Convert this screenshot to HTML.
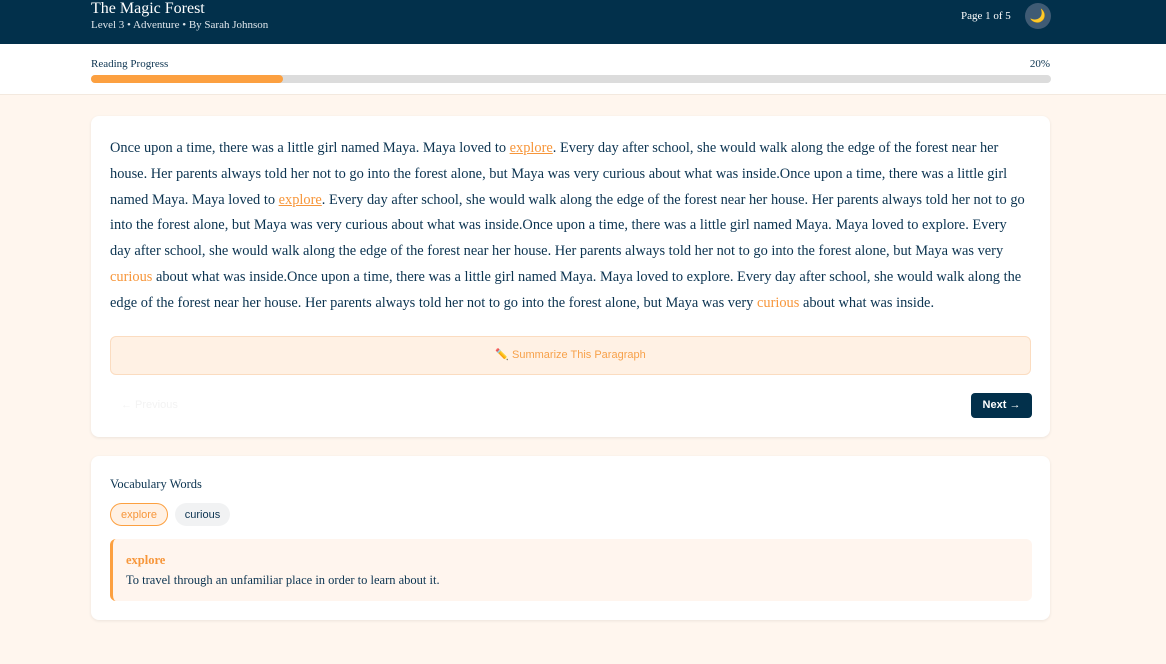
<!DOCTYPE html><html><head><style>
*{margin:0;padding:0;box-sizing:border-box}
body{width:1166px;height:664px;background:#fff6ee;font-family:"Liberation Serif",serif;color:#0b3350;overflow:hidden}
.hd{height:44px;background:#02304b;color:#fff;position:relative}
.t{position:absolute;left:91px;top:0px;font-size:16px}
.s{position:absolute;left:91px;top:19px;font-size:11px;color:#dfe6ec}
.pg{position:absolute;left:961px;top:10px;font-size:11px}
.moon{position:absolute;left:1025px;top:3px;width:26px;height:26px;border-radius:50%;background:#3f5b74;color:#f7c948;font-size:13px;text-align:center;line-height:26px}
.pr{height:51px;background:#fff;border-bottom:1px solid #f3e9df;position:relative;font-size:11px}
.pl{position:absolute;left:91px;top:14px}.pp{position:absolute;right:116px;top:14px}
.bar{position:absolute;left:91px;top:31px;width:960px;height:8px;background:#dcdcdc;border-radius:4px}
.bar div{width:192px;height:8px;background:#fca040;border-radius:4px}
.card{position:absolute;left:91px;width:959px;background:#fff;border-radius:8px;box-shadow:0 1px 3px rgba(0,0,0,.08)}
.txt{padding:0 19px;margin-top:20px;font-size:14.4px;line-height:25.8px}
.o{color:#f7963a}.u{color:#f7963a;text-decoration:underline}
.sum{margin:19px 19px 0;height:39px;border:1px solid #fbdcc0;background:#fff1e4;border-radius:6px;text-align:center;line-height:37px;font-family:"Liberation Sans",sans-serif;font-size:11px;color:#f7a14a}
.prev{position:absolute;left:30px;top:283px;font-family:"Liberation Sans",sans-serif;font-size:11px;color:#f3f3f3}
.next{position:absolute;left:880px;top:277px;width:61px;height:25px;background:#02304b;color:#fff;border-radius:4px;font-family:"Liberation Sans",sans-serif;font-size:11px;font-weight:bold;text-align:center;line-height:25px}
.tag{position:absolute;top:47px;height:23px;border-radius:12px;font-family:"Liberation Sans",sans-serif;font-size:11px;line-height:23px;text-align:center;padding-top:2px}
.def{position:absolute;left:19px;top:83px;width:922px;height:62px;background:#fff5ee;border-left:3px solid #fca040;border-radius:6px;padding:14px 13px;font-size:12.5px}
</style></head><body>
<div class="hd"><div class="t">The Magic Forest</div><div class="s">Level 3 • Adventure • By Sarah Johnson</div><div class="pg">Page 1 of 5</div><div class="moon">🌙</div></div>
<div class="pr"><div class="pl">Reading Progress</div><div class="pp">20%</div><div class="bar"><div></div></div></div>
<div class="card" style="top:116px;height:321px">
<div class="txt">Once upon a time, there was a little girl named Maya. Maya loved to <span class="u">explore</span>. Every day after school, she would walk along the edge of the forest near her house. Her parents always told her not to go into the forest alone, but Maya was very curious about what was inside.Once upon a time, there was a little girl named Maya. Maya loved to <span class="u">explore</span>. Every day after school, she would walk along the edge of the forest near her house. Her parents always told her not to go into the forest alone, but Maya was very curious about what was inside.Once upon a time, there was a little girl named Maya. Maya loved to explore. Every day after school, she would walk along the edge of the forest near her house. Her parents always told her not to go into the forest alone, but Maya was very <span class="o">curious</span> about what was inside.Once upon a time, there was a little girl named Maya. Maya loved to explore. Every day after school, she would walk along the edge of the forest near her house. Her parents always told her not to go into the forest alone, but Maya was very <span class="o">curious</span> about what was inside.</div>
<div class="sum">✏️ Summarize This Paragraph</div>
<div class="prev">← Previous</div><div class="next">Next →</div>
</div>
<div class="card" style="top:456px;height:164px">
<div style="position:absolute;left:19px;top:21px;font-size:12.5px">Vocabulary Words</div>
<div class="tag" style="left:19px;width:58px;border:1px solid #fca040;background:#fff1e4;color:#f7963a;line-height:19px">explore</div>
<div class="tag" style="left:84px;width:55px;background:#f1f2f3;color:#0b3350;line-height:21px">curious</div>
<div class="def"><div style="color:#f7963a;font-weight:bold">explore</div><div style="margin-top:5px">To travel through an unfamiliar place in order to learn about it.</div></div>
</div>
</body></html>
